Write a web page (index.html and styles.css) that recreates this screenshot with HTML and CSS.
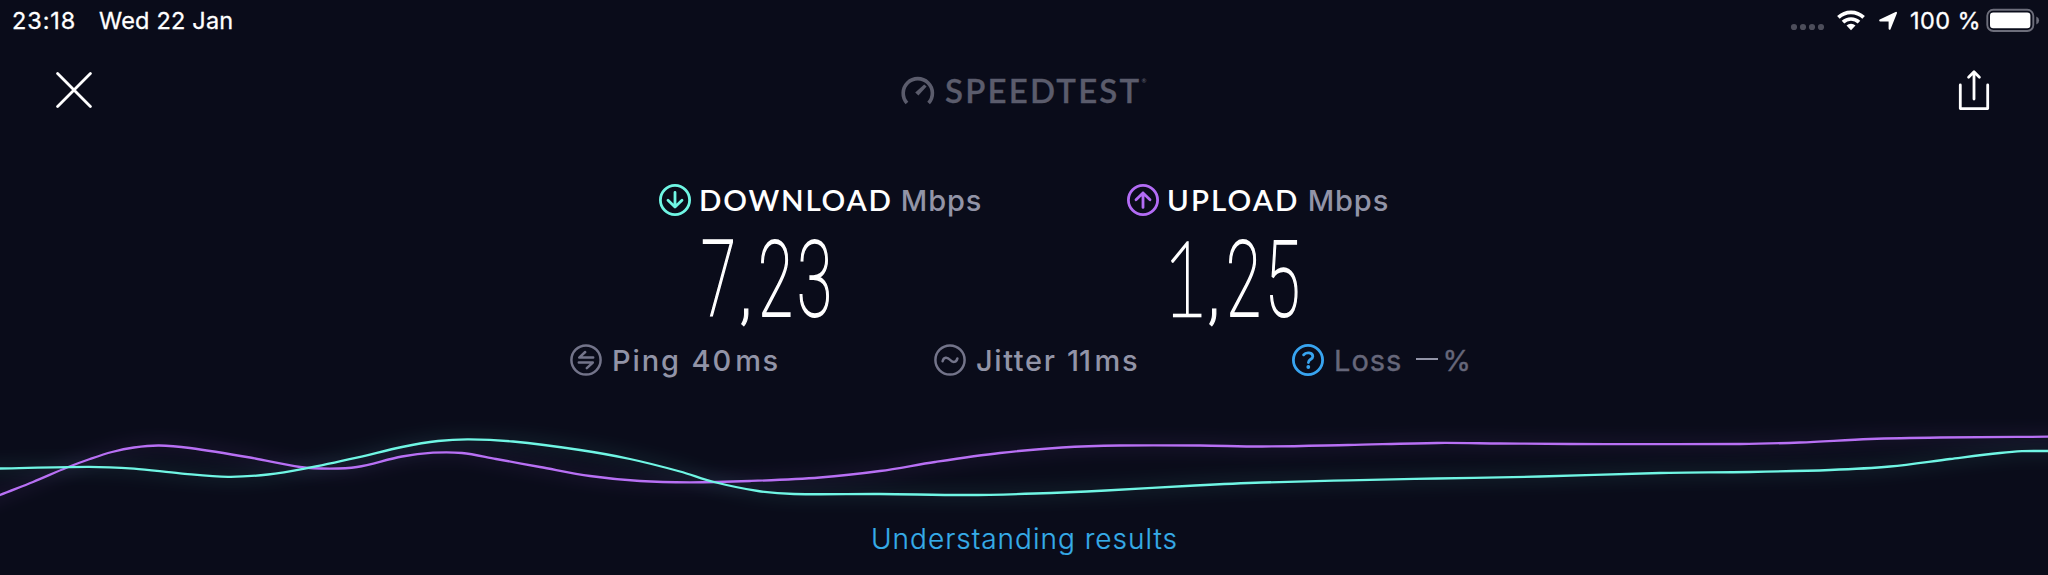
FILE: index.html
```
<!DOCTYPE html>
<html lang="en">
<head>
<meta charset="utf-8">
<title>Speedtest results</title>
<link rel="stylesheet" href="styles.css">
</head>
<body>
<header class="status">
  <span class="clock">23:18</span>
  <span class="date">Wed 22 Jan</span>
  <svg class="status-icons" width="108" height="41" viewBox="1790 0 108 41">
    <g class="dots"><circle cx="1794" cy="27" r="3.1"/><circle cx="1803" cy="27" r="3.1"/><circle cx="1812" cy="27" r="3.1"/><circle cx="1821" cy="27" r="3.1"/></g>
    <g class="wifi"><path d="M1838.4 17.4a18.2 18.2 0 0 1 25.2 0"/><path d="M1843 22.2a11.6 11.6 0 0 1 16 0"/></g>
    <path class="solid" d="M1851 30.2l-4.5-4.6a6.4 6.4 0 0 1 9 0z"/>
    <path class="solid arrow" d="M1896 12.8l-6.4 16v-8.400h-9.400z"/>
  </svg>
  <span class="charge">100 %</span>
  <svg class="battery" width="56" height="41" viewBox="1984 0 56 41">
    <rect class="shell" x="1987.3" y="9.8" width="46" height="21.2" rx="6"/>
    <rect class="solid" x="1990" y="12.6" width="40.4" height="15.6" rx="3.2"/>
    <path class="tip" d="M2036.3 16.6q2.8 1.2 2.8 4t-2.8 4z"/>
  </svg>
</header>

<nav class="nav">
  <svg class="line-icon" width="36" height="98" viewBox="56 41 36 98"><path d="M57.6 73.6l32.8 32.8M90.4 73.6l-32.8 32.8"/></svg>
  <div class="brand">
    <svg class="gauge" width="36" height="34" viewBox="900 73 36 34">
      <path d="M907 103a14.6 14.6 0 1 1 21.6 0"/><path class="needle" d="M915.2 92.6l9-8.2 2.4 2.2-8.200 9z"/>
    </svg>
    <span class="brand-name">SPEEDTEST</span><span class="mark">®</span>
  </div>
  <svg class="line-icon share" width="34" height="98" viewBox="1957 41 34 98"><path d="M1960.3 85v23.6h27.4V85M1974 99V72M1968.6 77.2l5.4-5.4 5.4 5.4"/></svg>
</nav>

<main>
  <section class="results">
    <article class="result">
      <h2 class="label">
        <svg class="ring teal" width="32" height="32" viewBox="0 0 32 32"><circle cx="16" cy="16" r="14.6"/><path d="M16 8.4v14.4M9 16.2l7 6.8 7-6.8"/></svg>
        <span class="name download">DOWNLOAD</span><span class="unit">Mbps</span>
      </h2>
      <svg class="figure" width="160" height="112" viewBox="690 220 160 112">
        <text transform="translate(701 316) scale(.6 1)">7</text>
        <text class="comma" transform="translate(740 316) scale(.8 1)">,</text>
        <text transform="translate(758 316) scale(.6 1)">2</text>
        <text transform="translate(797 316) scale(.6 1)">3</text>
      </svg>
    </article>
    <article class="result">
      <h2 class="label">
        <svg class="ring violet" width="32" height="32" viewBox="0 0 32 32"><circle cx="16" cy="16" r="14.6"/><path d="M16 23.4V9M9 15.8L16 9l7 6.8"/></svg>
        <span class="name upload">UPLOAD</span><span class="unit">Mbps</span>
      </h2>
      <svg class="figure" width="160" height="112" viewBox="690 220 160 112">
        <text class="one" transform="translate(695 316) scale(.73 1)">1</text>
        <text class="comma" transform="translate(740 316) scale(.8 1)">,</text>
        <text transform="translate(758 316) scale(.6 1)">2</text>
        <text transform="translate(797 316) scale(.6 1)">5</text>
      </svg>
    </article>
  </section>

  <section class="metrics">
    <div class="metric">
      <svg class="ring grey" width="32" height="32" viewBox="0 0 32 32"><circle cx="16" cy="16" r="14.6"/><path d="M23.2 13.6H9.2l6-5.6M8.8 18.6h14l-6 5.6"/></svg>
      <span class="title ping">Ping</span><span class="value forty">40</span><span class="ms">ms</span>
    </div>
    <div class="metric">
      <svg class="ring grey" width="32" height="32" viewBox="0 0 32 32"><circle cx="16" cy="16" r="14.6"/><path d="M8.6 17.2c1-4.2 4.6-4.6 7.4-1.4s6.4 2.8 7.4-1.4"/></svg>
      <span class="title jitter">Jitter</span><span class="value eleven">11</span><span class="ms">ms</span>
    </div>
    <div class="metric loss">
      <svg class="ring blue" width="32" height="32" viewBox="0 0 32 32"><circle cx="16" cy="16" r="14.6"/><path d="M11.6 10.8c2.4-3 9.2-2.6 9.2 1.6 0 3-4.4 2.8-4.4 6.2"/><circle class="point" cx="16.3" cy="23" r="1.9"/></svg>
      <span class="title">Loss</span><span class="dash"></span><span class="percent">%</span>
    </div>
  </section>

  <svg class="chart" width="2048" height="139" viewBox="0 380 2048 139">
    <defs><filter id="glow" filterUnits="userSpaceOnUse" x="0" y="380" width="2048" height="139"><feGaussianBlur stdDeviation="8"/></filter></defs>
    <path class="halo violet-line" data-series="upload" filter="url(#glow)"/>
    <path class="halo teal-line" data-series="download" filter="url(#glow)"/>
    <path class="violet-line" data-series="upload"/>
    <path class="teal-line" data-series="download"/>
  </svg>
  <a class="more">Understanding results</a>
</main>
<script src="chart.js"></script>
</body>
</html>
```
FILE: styles.css
```
body { margin: 0; width: 2048px; height: 575px; overflow: hidden; background: #0a0c1a; color: #fff; font-family: Inter, "Liberation Sans", sans-serif; }
svg { display: block; flex: none; }
span { white-space: nowrap; }

.status { display: flex; align-items: center; box-sizing: border-box; height: 41px; padding: 0 8px 0 12px; font-size: 23.5px; line-height: 41px; -webkit-text-stroke: .3px currentColor; }
.clock { width: 87px; letter-spacing: .9px; }
.date { letter-spacing: .2px; }
.status-icons { margin-left: auto; }
.charge { width: 74px; margin-left: 12px; letter-spacing: .4px; }
.solid { fill: #fff; }
.arrow { stroke: #fff; stroke-width: 2; stroke-linejoin: round; }
.dots { fill: #4c4d5a; }
.wifi { fill: none; stroke: #fff; stroke-width: 3.7; }
.shell { fill: none; stroke: #6d6e7b; stroke-width: 1.9; }
.tip { fill: #6d6e7b; }

.nav { display: flex; align-items: center; height: 98px; padding: 0 57px 0 56px; }
.line-icon { fill: none; stroke: #fff; stroke-width: 2.8; stroke-linecap: round; stroke-linejoin: round; }
.share { margin-left: auto; }
.brand { display: flex; align-items: center; margin-left: 808px; color: #5b5c6c; font: 600 33px/40px Lato, sans-serif; }
.gauge { fill: none; stroke: #5b5c6c; stroke-width: 3.6; }
.needle { fill: #5b5c6c; stroke: none; }
.brand-name { margin-left: 9px; letter-spacing: 2.2px; -webkit-text-stroke: .3px currentColor; }
.mark { align-self: flex-start; margin-top: 8px; font-size: 6px; line-height: 6px; }

.results { display: flex; margin-top: 41px; padding-left: 659px; }
.result { width: 468px; }
.label { display: flex; align-items: center; height: 40px; margin: 0; font-size: 29px; line-height: 40px; font-weight: 500; }
.name { margin-left: 8px; font: 600 29.5px/40px Lato, sans-serif; }
.download { letter-spacing: 1.8px; }
.upload { letter-spacing: 2.1px; }
.unit { margin-left: 8px; padding-top: 1px; letter-spacing: .9px; color: #9294a7; }
.ring { fill: none; stroke: currentColor; stroke-width: 2.8; stroke-linecap: round; stroke-linejoin: round; }
.teal { color: #70f6e4; }
.violet { color: #b36cf5; }
.grey { color: #73748a; stroke-width: 2.5; }
.blue { color: #38a4f0; }
.point { fill: currentColor; stroke: none; }
.figure { margin-left: 31px; overflow: visible; font: 100 106.5px Roboto, sans-serif; fill: #fff; stroke: #fff; stroke-width: 1.9px; }
.one { font: 100 105px Lato, sans-serif; stroke-width: 2.4px; }
.comma { font: 300 74px Roboto, sans-serif; stroke-width: 1.2px; }

.metrics { display: grid; grid-template-columns: 364px 358px auto; margin-top: 8px; padding-left: 570px; }
.metric { display: flex; align-items: center; height: 40px; color: #9294a7; font-size: 29px; line-height: 40px; font-weight: 500; }
.metric span:not(.dash) { padding-top: 1px; }
.title { margin-left: 10px; letter-spacing: 1px; }
.ping { letter-spacing: 1.9px; }
.jitter { letter-spacing: 1.6px; }
.value { margin-left: 10.5px; }
.forty { letter-spacing: 2px; }
.eleven { margin-right: 1.5px; }
.ms { margin-left: 2px; letter-spacing: 1.6px; }
.loss { color: #66677a; font-weight: 400; -webkit-text-stroke: .4px currentColor; }
.dash { width: 22px; height: 2.5px; margin: -2px 4px 0 14px; background: #9294a7; }

.chart path { fill: none; stroke-width: 2.3; }
.violet-line { stroke: #b870f4; }
.teal-line { stroke: #70f6e4; }
.chart .halo { stroke-width: 12; opacity: .08; }
.more { display: block; height: 40px; padding-left: 1px; text-align: center; color: #36ace8; font-size: 28px; line-height: 41px; font-weight: 300; letter-spacing: 1px; -webkit-text-stroke: .2px currentColor; }
```
FILE: chart.js
```
const series = {
  download: [[-20,469],[0,468.5],[89,466.8],[134,468.7],[180,473.3],[228,476.8],[268,474.5],[306,468.3],[358,457.3],[402,447],[438,441],[469,439.3],[513,441.5],[580,450],[630,459],[680,471.5],[714,482],[758,491],[794,494],[880,494],[968,495],[1035,493.5],[1106,490.5],[1195,485.5],[1262,482.5],[1348,480.3],[1437,478.5],[1540,476.5],[1660,473],[1750,472],[1830,470],[1890,466.5],[1950,459],[2000,453],[2022,451.2],[2048,451],[2060,451]],
  upload: [[-20,503.5],[0,495],[33,482],[67,467.5],[90,459],[112,452],[134,447.5],[159,445.5],[190,448],[250,457.5],[300,467],[330,468.7],[357,467],[402,456.5],[433,452.7],[462,453],[496,459],[540,467],[590,476],[640,481],[690,482.3],[750,481],[820,477.5],[880,471],[935,462],[1000,453],[1062,447.5],[1120,445.5],[1200,445.5],[1262,446.5],[1348,445],[1437,443],[1500,443.5],[1570,444],[1740,444],[1800,442.5],[1870,439],[1940,437.5],[2048,436.7],[2060,436.7]]
};

// Smooth curve through every sample; control points share each sample's slope.
function smooth(points) {
  const slope = points.map((p, i) => {
    const a = points[Math.max(0, i - 1)], b = points[Math.min(points.length - 1, i + 1)];
    return (b[1] - a[1]) / (b[0] - a[0]);
  });
  let d = `M${points[0]}`;
  for (let i = 1; i < points.length; i++) {
    const [x0, y0] = points[i - 1], [x1, y1] = points[i], t = (x1 - x0) / 3;
    d += `C${x0 + t} ${y0 + slope[i - 1] * t} ${x1 - t} ${y1 - slope[i] * t} ${x1} ${y1}`;
  }
  return d;
}

document.querySelectorAll('[data-series]').forEach(path => path.setAttribute('d', smooth(series[path.dataset.series])));
```
